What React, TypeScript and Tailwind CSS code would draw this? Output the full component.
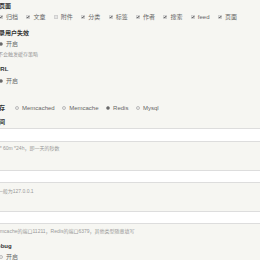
import React from 'react'

const pages = [
  { name: '归档', on: true },
  { name: '文章', on: true },
  { name: '附件', on: false },
  { name: '分类', on: true },
  { name: '标签', on: true },
  { name: '作者', on: true },
  { name: '搜索', on: true },
  { name: 'feed', on: true },
  { name: '页面', on: true },
]

const drivers = ['Memcached', 'Memcache', 'Redis', 'Mysql']

function Check({ on }: { on: boolean }) {
  return (
    <svg width="4" height="4" viewBox="0 0 8 8" className="shrink-0">
      <rect x="0.5" y="0.5" width="7" height="7" rx="1" fill="#e4e4e4" stroke="#aaa" />
      {on && <path d="M1.8 4.2 L3.4 5.8 L6.4 2" fill="none" stroke="#333" strokeWidth="1.6" />}
    </svg>
  )
}

function Radio({ on }: { on: boolean }) {
  return on ? (
    <span className="w-[4px] h-[4px] rounded-full bg-[#555] border border-[#999] shrink-0" />
  ) : (
    <span className="w-[4px] h-[4px] rounded-full bg-[#eee] border border-[#bbb] shrink-0" />
  )
}

function Label({ children, className = '' }: { children: React.ReactNode; className?: string }) {
  return <div className={`h-[8px] leading-[8px] text-[6px] font-bold text-[#333] whitespace-nowrap ${className}`}>{children}</div>
}

function Hint({ children, className = '' }: { children: React.ReactNode; className?: string }) {
  return <div className={`h-[8px] leading-[8px] text-[5px] text-[#999] whitespace-nowrap ${className}`}>{children}</div>
}

function Input({ className = '' }: { className?: string }) {
  return <div className={`w-[300px] bg-white border border-[#ddd] ${className}`} />
}

export default function App() {
  return (
    <div className="w-[260px] h-[260px] overflow-hidden bg-[#f6f6f2] font-['Liberation_Sans','Noto_Sans_CJK_SC',sans-serif]">
      <div className="-ml-[7px] pt-[2px]">
        <Label className="pl-[6px]">页面</Label>

        <div className="mt-[3px] h-[8px] pl-[6px] flex items-center gap-x-[8.4px] text-[6px] text-[#666] whitespace-nowrap">
          {pages.map((p) => (
            <div key={p.name} className="flex items-center gap-[3px]">
              <Check on={p.on} />
              <span className="leading-[8px]">{p.name}</span>
            </div>
          ))}
        </div>

        <Label className="mt-[8px]">登录用户失效</Label>
        <div className="mt-[3px] h-[8px] pl-[6px] flex items-center gap-[3px] text-[6px] text-[#666]">
          <Radio on={true} />
          <span className="leading-[8px]">开启</span>
        </div>
        <Hint className="mt-[2px]">将不会触发缓存策略</Hint>

        <Label className="mt-[7px] pl-[3px]">URL</Label>
        <div className="mt-[4px] h-[8px] pl-[6px] flex items-center gap-[3px] text-[6px] text-[#666]">
          <Radio on={true} />
          <span className="leading-[8px]">开启</span>
        </div>

        <div className="mt-[19px] h-[8px] flex items-center text-[6px] whitespace-nowrap">
          <span className="font-bold text-[#333] leading-[8px] mr-[10px]">缓存</span>
          <div className="flex items-center gap-x-[7.5px] text-[#666]">
            {drivers.map((d) => (
              <div key={d} className="flex items-center gap-[3px]">
                <Radio on={d === 'Redis'} />
                <span className="leading-[8px]">{d}</span>
              </div>
            ))}
          </div>
        </div>

        <Label className="mt-[6px]">时间</Label>
        <Input className="mt-[2px] h-[14px]" />
        <Hint className="mt-[2px]">1s * 60m *24h，即一天的秒数</Hint>

        <Input className="mt-[18px] h-[13px]" />
        <Hint className="mt-[4px]">IP一般为127.0.0.1</Hint>

        <Input className="mt-[16px] h-[13px]" />
        <Hint className="mt-[3px]">Memcache的端口11211，Redis的端口6379，其他类型随意填写</Hint>

        <Label className="mt-[7px]">Debug</Label>
        <div className="mt-[3px] h-[8px] pl-[6px] flex items-center gap-[3px] text-[6px] text-[#666]">
          <Radio on={false} />
          <span className="leading-[8px]">开启</span>
        </div>
      </div>
    </div>
  )
}
